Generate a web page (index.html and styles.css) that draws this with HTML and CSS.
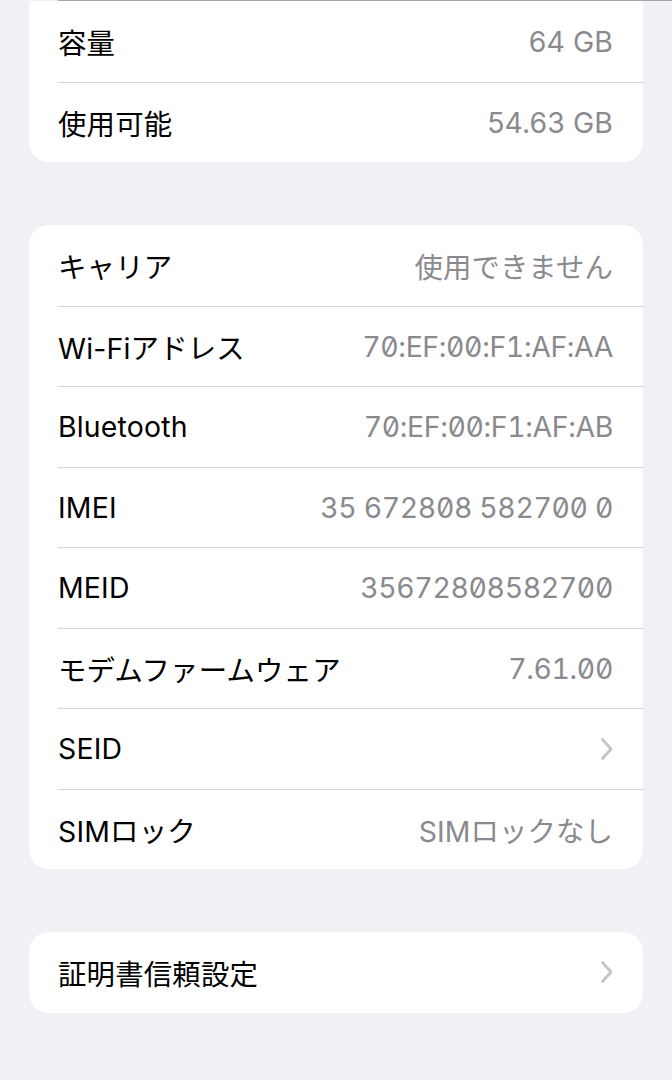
FILE: index.html
```html
<!DOCTYPE html>
<html lang="ja">
<head>
    <meta charset="UTF-8">
    <meta name="viewport" content="width=device-width, initial-scale=1.0">
    <title>情報</title>
    <link rel="stylesheet" href="styles.css">
</head>
<body>
    <div class="edge"></div>
    <div class="page">
        <div class="group group-cut">
            <div class="row">
                <span class="label">容量</span>
                <span class="value">64 GB</span>
            </div>
            <div class="row">
                <span class="label">使用可能</span>
                <span class="value">54.63 GB</span>
            </div>
        </div>

        <div class="group">
            <div class="row">
                <span class="label">キャリア</span>
                <span class="value">使用できません</span>
            </div>
            <div class="row">
                <span class="label">Wi-Fiアドレス</span>
                <span class="value mono">70:EF:00:F1:AF:AA</span>
            </div>
            <div class="row">
                <span class="label">Bluetooth</span>
                <span class="value mono">70:EF:00:F1:AF:AB</span>
            </div>
            <div class="row">
                <span class="label">IMEI</span>
                <span class="value mono">35 672808 582700 0</span>
            </div>
            <div class="row">
                <span class="label">MEID</span>
                <span class="value mono">35672808582700</span>
            </div>
            <div class="row">
                <span class="label">モデムファームウェア</span>
                <span class="value mono">7.61.00</span>
            </div>
            <div class="row">
                <span class="label">SEID</span>
                <svg class="chevron" width="14" height="24" viewBox="0 0 14 24"><path d="M2.5 2.5 L11 12 L2.5 21.5" /></svg>
            </div>
            <div class="row">
                <span class="label">SIMロック</span>
                <span class="value">SIMロックなし</span>
            </div>
        </div>

        <div class="group">
            <div class="row">
                <span class="label">証明書信頼設定</span>
                <svg class="chevron" width="14" height="24" viewBox="0 0 14 24"><path d="M2.5 2.5 L11 12 L2.5 21.5" /></svg>
            </div>
        </div>
    </div>
</body>
</html>
```

FILE: styles.css
```css
* {
    margin: 0;
    padding: 0;
    box-sizing: border-box;
}

body {
    font-family: Inter, 'Noto Sans CJK JP', sans-serif;
    background: #f0f0f5;
    color: #000;
    min-height: 100vh;
}

.edge {
    height: 1px;
    margin-left: 58px;
    background: #a4a4a8;
}

.page {
    padding: 0 29px;
    display: flex;
    flex-direction: column;
    gap: 63px;
}

.group {
    background: #fff;
    border-radius: 20px;
}

.group-cut {
    border-radius: 0 0 20px 20px;
}

.row {
    height: 80.5px;
    margin-left: 29px;
    padding-right: 30px;
    display: flex;
    align-items: center;
    justify-content: space-between;
    font-size: 28.4px;
}

.row + .row {
    border-top: 1px solid #d6d6da;
}

.label {
    letter-spacing: 0.2px;
}

.value {
    color: #8a8a8e;
    letter-spacing: 0.1px;
}

.mono {
    font-variant-numeric: tabular-nums slashed-zero;
    letter-spacing: -0.35px;
}

.chevron {
    margin-right: -1px;
}

.chevron path {
    fill: none;
    stroke: #c4c4c7;
    stroke-width: 2.8;
    stroke-linecap: round;
    stroke-linejoin: round;
}
```
